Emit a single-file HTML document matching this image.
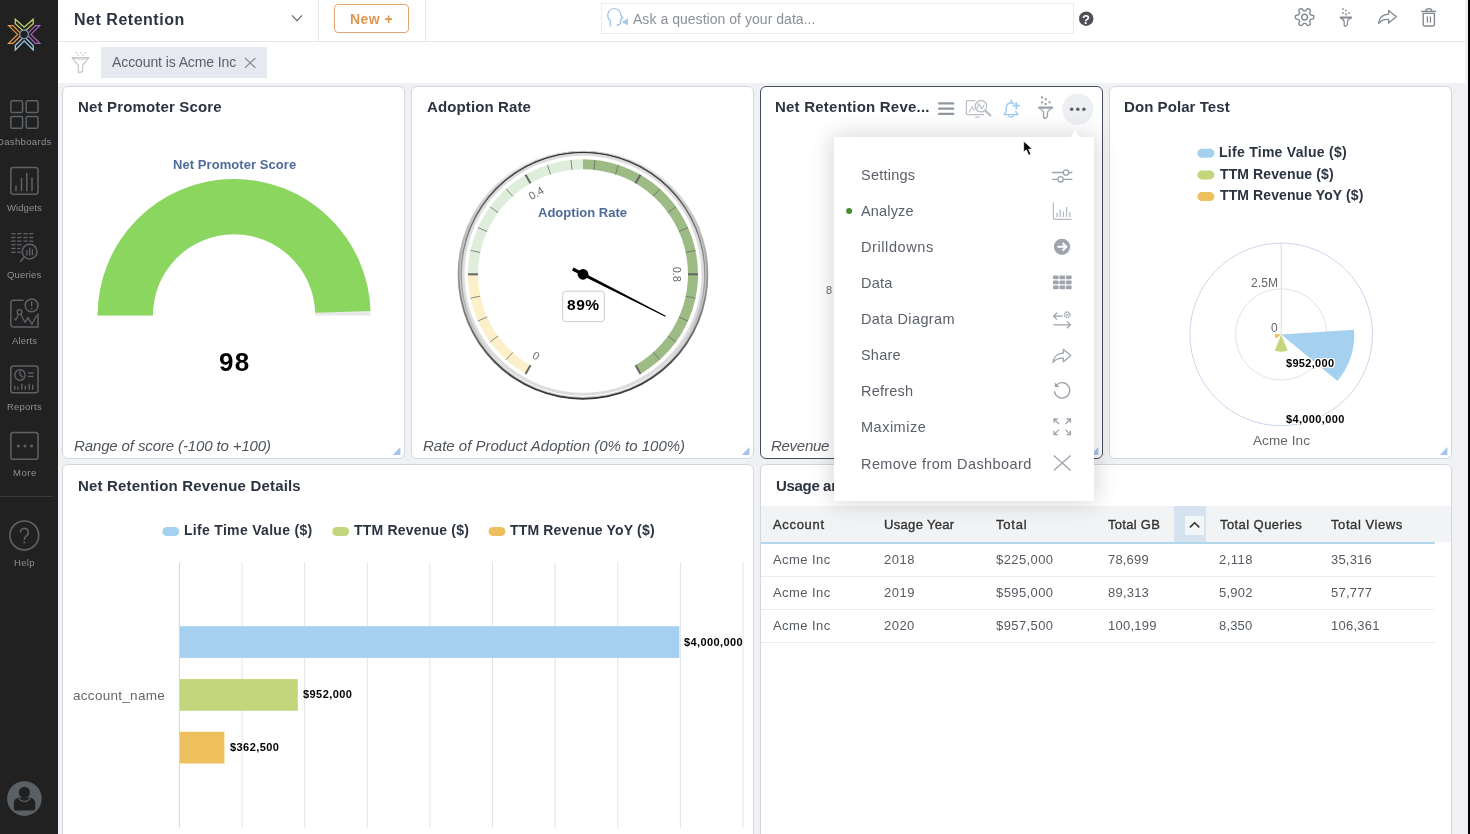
<!DOCTYPE html>
<html><head><meta charset="utf-8"><title>Net Retention</title>
<style>
*{box-sizing:border-box;margin:0;padding:0}
html,body{width:1470px;height:834px;overflow:hidden}
body{font-family:"Liberation Sans",sans-serif;background:#f0f1f4;position:relative;color:#2c3442}
.abs{position:absolute}
.t{position:absolute;white-space:pre;line-height:1;will-change:transform}
svg{position:absolute;left:0;top:0;overflow:visible}
.card{position:absolute;background:#fff;border:1px solid #cfd2d7;border-radius:6px}
</style></head><body>

<!-- TOPBAR -->
<div class="abs" style="left:58px;top:0;width:1412px;height:41px;background:#fff"></div>
<div class="abs" style="left:58px;top:41px;width:1412px;height:1px;background:#e3e6eb"></div>
<div class="abs" style="left:58px;top:42px;width:1412px;height:41px;background:#fff"></div>
<div class="t" style="left:73.94px;top:12.00px;font-size:16px;color:#2c3442;font-weight:700;letter-spacing:0.521px;">Net Retention</div>
<div class="abs" style="left:318px;top:0;width:1px;height:41px;background:#e3e6eb"></div>
<div class="abs" style="left:425px;top:0;width:1px;height:41px;background:#e3e6eb"></div>
<div class="abs" style="left:334px;top:4px;width:75px;height:29px;border:1px solid #e2a571;border-radius:4px"></div>
<div class="t" style="left:350.28px;top:12.00px;font-size:14px;color:#e0974f;font-weight:700;letter-spacing:0.458px;">New +</div>
<div class="abs" style="left:601px;top:3px;width:473px;height:31px;border:1px solid #e7eaee"></div>
<div class="t" style="left:633.37px;top:12.00px;font-size:14px;color:#8b9098;letter-spacing:0.037px;">Ask a question of your data...</div>
<div class="abs" style="left:101px;top:47px;width:166px;height:31px;background:#e7e9f0"></div>
<div class="t" style="left:111.97px;top:55.00px;font-size:14px;color:#5b606a;letter-spacing:-0.098px;">Account is Acme Inc</div>
<svg width="1470" height="834" viewBox="0 0 1470 834" ><polyline points="292,15.4 297,20.8 302,15.4" fill="none" stroke="#6f747d" stroke-width="1.3"/><path d="M245,58L255.4,67.8M255.4,58L245,67.8" stroke="#8b9098" stroke-width="1.2" fill="none"/><path d="M72,57.6H89L82.6,65.4V71.6L78.4,72.6V65.4Z" fill="none" stroke="#c3c6cb" stroke-width="1.2" stroke-linejoin="round"/><path d="M72,57.6Q80.5,61 89,57.6" fill="none" stroke="#c3c6cb" stroke-width="1"/><rect x="75.3" y="52.0" width="1.5" height="1.2" fill="#c3c6cb"/><rect x="79.8" y="52.0" width="1.5" height="1.2" fill="#c3c6cb"/><rect x="84.3" y="52.0" width="1.5" height="1.2" fill="#c3c6cb"/><rect x="77.5" y="54.4" width="1.5" height="1.2" fill="#c3c6cb"/><rect x="82.1" y="54.4" width="1.5" height="1.2" fill="#c3c6cb"/><path d="M610.3,26.6V20.8C607.4,18.6 606.8,14 609,11C611.6,7.6 617,7.8 619.4,10.8C620.6,12.4 620.8,14 620.8,15.2L622.8,17.8L620.8,18.8L621.3,20.4L620,21.4L620.6,22.8C620.8,24 619.8,24.6 618.6,24.6L617.4,24.8V26.2" fill="none" stroke="#9dbfe1" stroke-width="1.2" stroke-linejoin="round"/><path d="M622.4,21.5L628,18.5V25.3L622.4,22.7Z" fill="#a9c9e8"/><circle cx="1086.2" cy="18.7" r="7.2" fill="#4d5156"/><polygon points="1304.60,10.80 1304.87,10.81 1305.15,10.82 1305.42,10.85 1305.73,10.68 1306.14,10.16 1306.61,9.61 1307.12,9.10 1307.67,8.66 1308.12,8.60 1308.49,8.76 1308.85,8.94 1309.20,9.13 1309.54,9.34 1309.88,9.56 1310.20,9.80 1310.37,10.22 1310.27,10.92 1310.08,11.62 1309.84,12.30 1309.59,12.91 1309.60,13.26 1309.76,13.49 1309.91,13.72 1310.06,13.95 1310.19,14.19 1310.31,14.44 1310.42,14.69 1310.72,14.87 1311.38,14.96 1312.09,15.09 1312.79,15.28 1313.45,15.54 1313.72,15.90 1313.76,16.30 1313.79,16.70 1313.80,17.10 1313.79,17.50 1313.76,17.90 1313.72,18.30 1313.45,18.66 1312.79,18.92 1312.09,19.11 1311.38,19.24 1310.72,19.33 1310.42,19.51 1310.31,19.76 1310.19,20.01 1310.06,20.25 1309.91,20.48 1309.76,20.71 1309.60,20.94 1309.59,21.29 1309.84,21.90 1310.08,22.58 1310.27,23.28 1310.37,23.98 1310.20,24.40 1309.88,24.64 1309.54,24.86 1309.20,25.07 1308.85,25.26 1308.49,25.44 1308.12,25.60 1307.67,25.54 1307.12,25.10 1306.61,24.59 1306.14,24.04 1305.73,23.52 1305.42,23.35 1305.15,23.38 1304.87,23.39 1304.60,23.40 1304.33,23.39 1304.05,23.38 1303.78,23.35 1303.47,23.52 1303.06,24.04 1302.59,24.59 1302.08,25.10 1301.53,25.54 1301.08,25.60 1300.71,25.44 1300.35,25.26 1300.00,25.07 1299.66,24.86 1299.32,24.64 1299.00,24.40 1298.83,23.98 1298.93,23.28 1299.12,22.58 1299.36,21.90 1299.61,21.29 1299.60,20.94 1299.44,20.71 1299.29,20.48 1299.14,20.25 1299.01,20.01 1298.89,19.76 1298.78,19.51 1298.48,19.33 1297.82,19.24 1297.11,19.11 1296.41,18.92 1295.75,18.66 1295.48,18.30 1295.44,17.90 1295.41,17.50 1295.40,17.10 1295.41,16.70 1295.44,16.30 1295.48,15.90 1295.75,15.54 1296.41,15.28 1297.11,15.09 1297.82,14.96 1298.48,14.87 1298.78,14.69 1298.89,14.44 1299.01,14.19 1299.14,13.95 1299.29,13.72 1299.44,13.49 1299.60,13.26 1299.61,12.91 1299.36,12.30 1299.12,11.62 1298.93,10.92 1298.83,10.22 1299.00,9.80 1299.32,9.56 1299.66,9.34 1300.00,9.13 1300.35,8.94 1300.71,8.76 1301.08,8.60 1301.53,8.66 1302.08,9.10 1302.59,9.61 1303.06,10.16 1303.47,10.68 1303.78,10.85 1304.05,10.82 1304.33,10.81" fill="none" stroke="#838891" stroke-width="1.4" stroke-linejoin="round"/><circle cx="1304.6" cy="17.1" r="2.9" fill="none" stroke="#838891" stroke-width="1.4"/><rect x="1339.70" y="16.40" width="12.40" height="2.00" rx="0.90" fill="#838891"/><path d="M1340.60,17.90C1343.00,19.00 1344.20,20.00 1344.20,22.00V25.60L1345.40,26.40L1347.40,24.60V22.00C1347.40,20.00 1348.60,19.00 1351.20,17.90" fill="none" stroke="#838891" stroke-width="1.2" stroke-linejoin="round"/><rect x="1342.05" y="8.15" width="1.70" height="1.70" rx="0.3" fill="#838891"/><rect x="1345.15" y="9.65" width="1.70" height="1.70" rx="0.3" fill="#838891"/><rect x="1342.05" y="12.15" width="1.70" height="1.70" rx="0.3" fill="#838891"/><rect x="1348.25" y="12.15" width="1.70" height="1.70" rx="0.3" fill="#838891"/><rect x="1345.15" y="13.55" width="1.70" height="1.70" rx="0.3" fill="#838891"/><path d="M1388.6,10.6L1396.4,16.8L1388.6,23V19.4C1384.4,19 1380.8,20.4 1378.6,23.4C1379,18.2 1382.6,14.6 1388.6,14.2Z" fill="none" stroke="#838891" stroke-width="1.3" stroke-linejoin="round"/><path d="M1423.2,13.4H1434.4V24.4a1.6,1.6 0 0 1 -1.6,1.6H1424.8a1.6,1.6 0 0 1 -1.6,-1.6Z" fill="none" stroke="#838891" stroke-width="1.4"/><line x1="1421.2" y1="11.4" x2="1436.2" y2="11.4" stroke="#838891" stroke-width="1.4"/><path d="M1425.8,11.2a3,2.6 0 0 1 6,0" fill="none" stroke="#838891" stroke-width="1.4"/><line x1="1427.4" y1="16.4" x2="1427.4" y2="22.6" stroke="#838891" stroke-width="1.3"/><line x1="1430.4" y1="16.4" x2="1430.4" y2="22.6" stroke="#838891" stroke-width="1.3"/></svg>
<div class="t" style="left:1082.41px;top:13.00px;font-size:13px;color:#fff;font-weight:700;">?</div>
<!-- CARDS -->
<div class="card" style="left:62px;top:86px;width:343px;height:373px;border-color:#d3d6da"></div>
<div class="card" style="left:411px;top:86px;width:343px;height:373px;border-color:#d3d6da"></div>
<div class="card" style="left:760px;top:86px;width:343px;height:373px;border-color:#454d5c"></div>
<div class="card" style="left:1109px;top:86px;width:343px;height:373px;border-color:#d3d6da"></div>
<div class="card" style="left:62px;top:464px;width:692px;height:380px;border-color:#d3d6da"></div>
<div class="card" style="left:760px;top:464px;width:692px;height:380px;border-color:#d3d6da"></div>
<svg width="1470" height="834" viewBox="0 0 1470 834" ><path d="M400.4,447V455H392.79999999999995Z" fill="#9dbdea" opacity="0.9"/><path d="M749.4,447V455H741.8Z" fill="#9dbdea" opacity="0.9"/><path d="M1098.4,447V455H1090.8000000000002Z" fill="#9dbdea" opacity="0.9"/><path d="M1447.4,447V455H1439.8000000000002Z" fill="#9dbdea" opacity="0.9"/></svg>
<!-- CARD1 NPS -->
<div class="t" style="left:77.81px;top:99.00px;font-size:15px;color:#2c3442;font-weight:700;letter-spacing:0.167px;">Net Promoter Score</div>
<div class="t" style="left:172.54px;top:158.00px;font-size:13px;color:#4f6b9b;font-weight:700;letter-spacing:0.066px;">Net Promoter Score</div>
<svg width="1470" height="834" viewBox="0 0 1470 834" ><path d="M97.60,315.40A136.5,136.5 0 0 1 370.60,315.40L315.30,315.40A81.2,81.2 0 0 0 152.90,315.40Z" fill="#e8e8e8"/><path d="M97.60,315.40A136.5,136.5 0 0 1 370.53,311.11L315.26,312.85A81.2,81.2 0 0 0 152.90,315.40Z" fill="#8ad65f"/></svg>
<div class="t" style="left:218.62px;top:349.00px;font-size:26px;color:#000;font-weight:700;letter-spacing:1.352px;">98</div>
<div class="t" style="left:73.85px;top:438.00px;font-size:15px;color:#4f545d;font-style:italic;letter-spacing:-0.125px;">Range of score (-100 to +100)</div>
<!-- CARD2 Adoption gauge -->
<div class="t" style="left:426.54px;top:99.00px;font-size:15px;color:#2c3442;font-weight:700;letter-spacing:0.116px;">Adoption Rate</div>
<svg width="1470" height="834" viewBox="0 0 1470 834" ><defs><linearGradient id="g1" x1="0" y1="0" x2="0" y2="1"><stop offset="0" stop-color="#fff"/><stop offset="1" stop-color="#333"/></linearGradient><linearGradient id="g2" x1="0" y1="0" x2="0" y2="1"><stop offset="0" stop-color="#333"/><stop offset="1" stop-color="#fff"/></linearGradient></defs><circle cx="583" cy="274.3" r="125.35" fill="url(#g1)"/><circle cx="583" cy="274.3" r="123.05" fill="url(#g2)" stroke="#ccc" stroke-width="1"/><circle cx="583" cy="274.3" r="120.75" fill="#fff" stroke="#ccc" stroke-width="1"/><path d="M582.98,395.05A120.75,120.75 0 1 1 583.02,395.05L583.02,392.75A118.45,118.45 0 1 0 582.98,392.75Z" fill="#ddd"/><path d="M525.50,373.89A115.0,115.0 0 0 1 468.00,274.30L478.00,274.30A105.0,105.0 0 0 0 530.50,365.23Z" fill="#fcf0cb"/><path d="M468.00,274.30A115.0,115.0 0 0 1 583.00,159.30L583.00,169.30A105.0,105.0 0 0 0 478.00,274.30Z" fill="#deeedb"/><path d="M583.00,159.30A115.0,115.0 0 0 1 640.50,373.89L635.50,365.23A105.0,105.0 0 0 0 583.00,169.30Z" fill="#9dbb85"/><line x1="525.50" y1="373.89" x2="530.50" y2="365.23" stroke="#666" stroke-width="2" /><line x1="506.05" y1="359.76" x2="512.74" y2="352.33" stroke="#666" stroke-width="1" stroke-opacity="0.75"/><line x1="489.96" y1="341.90" x2="498.05" y2="336.02" stroke="#666" stroke-width="1" stroke-opacity="0.75"/><line x1="477.94" y1="321.07" x2="487.08" y2="317.01" stroke="#666" stroke-width="1" stroke-opacity="0.75"/><line x1="470.51" y1="298.21" x2="480.29" y2="296.13" stroke="#666" stroke-width="1" stroke-opacity="0.75"/><line x1="468.00" y1="274.30" x2="478.00" y2="274.30" stroke="#666" stroke-width="2" /><line x1="470.51" y1="250.39" x2="480.29" y2="252.47" stroke="#666" stroke-width="1" stroke-opacity="0.75"/><line x1="477.94" y1="227.53" x2="487.08" y2="231.59" stroke="#666" stroke-width="1" stroke-opacity="0.75"/><line x1="489.96" y1="206.70" x2="498.05" y2="212.58" stroke="#666" stroke-width="1" stroke-opacity="0.75"/><line x1="506.05" y1="188.84" x2="512.74" y2="196.27" stroke="#666" stroke-width="1" stroke-opacity="0.75"/><line x1="525.50" y1="174.71" x2="530.50" y2="183.37" stroke="#666" stroke-width="2" /><line x1="547.46" y1="164.93" x2="550.55" y2="174.44" stroke="#666" stroke-width="1" stroke-opacity="0.75"/><line x1="570.98" y1="159.93" x2="572.02" y2="169.88" stroke="#666" stroke-width="1" stroke-opacity="0.75"/><line x1="595.02" y1="159.93" x2="593.98" y2="169.88" stroke="#666" stroke-width="1" stroke-opacity="0.75"/><line x1="618.54" y1="164.93" x2="615.45" y2="174.44" stroke="#666" stroke-width="1" stroke-opacity="0.75"/><line x1="640.50" y1="174.71" x2="635.50" y2="183.37" stroke="#666" stroke-width="2" /><line x1="659.95" y1="188.84" x2="653.26" y2="196.27" stroke="#666" stroke-width="1" stroke-opacity="0.75"/><line x1="676.04" y1="206.70" x2="667.95" y2="212.58" stroke="#666" stroke-width="1" stroke-opacity="0.75"/><line x1="688.06" y1="227.53" x2="678.92" y2="231.59" stroke="#666" stroke-width="1" stroke-opacity="0.75"/><line x1="695.49" y1="250.39" x2="685.71" y2="252.47" stroke="#666" stroke-width="1" stroke-opacity="0.75"/><line x1="698.00" y1="274.30" x2="688.00" y2="274.30" stroke="#666" stroke-width="2" /><line x1="695.49" y1="298.21" x2="685.71" y2="296.13" stroke="#666" stroke-width="1" stroke-opacity="0.75"/><line x1="688.06" y1="321.07" x2="678.92" y2="317.01" stroke="#666" stroke-width="1" stroke-opacity="0.75"/><line x1="676.04" y1="341.90" x2="667.95" y2="336.02" stroke="#666" stroke-width="1" stroke-opacity="0.75"/><line x1="659.95" y1="359.76" x2="653.26" y2="352.33" stroke="#666" stroke-width="1" stroke-opacity="0.75"/><line x1="640.50" y1="373.89" x2="635.50" y2="365.23" stroke="#666" stroke-width="2" /><text x="536.10" y="355.53" transform="rotate(30.0 536.10 355.53)" text-anchor="middle" dy="4" font-size="11" fill="#666" font-family="Liberation Sans, sans-serif">0</text><text x="536.10" y="193.07" transform="rotate(-30.0 536.10 193.07)" text-anchor="middle" dy="4" font-size="11" fill="#666" font-family="Liberation Sans, sans-serif">0.4</text><text x="676.80" y="274.30" transform="rotate(90.0 676.80 274.30)" text-anchor="middle" dy="4" font-size="11" fill="#666" font-family="Liberation Sans, sans-serif">0.8</text><g transform="translate(583 274.3) rotate(27.00)"><path d="M-11.50,-1.7L92.58,-0.55L92.58,0.55L-11.50,1.7Z" fill="#000"/></g><circle cx="583" cy="274.3" r="5.4" fill="#000"/><rect x="562.7" y="291.2" width="41.6" height="30.4" rx="3" fill="#fff" stroke="#ccc" stroke-width="1"/></svg>
<div class="t" style="left:538.39px;top:206.00px;font-size:13px;color:#4f6b9b;font-weight:700;letter-spacing:0.020px;">Adoption Rate</div>
<div class="t" style="left:566.82px;top:297.00px;font-size:15.5px;color:#000;font-weight:700;letter-spacing:0.534px;">89%</div>
<div class="t" style="left:422.85px;top:438.00px;font-size:15px;color:#4f545d;font-style:italic;">Rate of Product Adoption (0% to 100%)</div>
<!-- CARD3 -->
<div class="t" style="left:775.11px;top:99.00px;font-size:15px;color:#2c3442;font-weight:700;letter-spacing:0.225px;">Net Retention Reve...</div>
<div class="t" style="left:771.15px;top:438.00px;font-size:15px;color:#4f545d;font-style:italic;letter-spacing:-0.276px;">Revenue</div>
<div class="t" style="left:825.73px;top:285.00px;font-size:11px;color:#666;">8</div>
<svg width="1470" height="834" viewBox="0 0 1470 834" ><rect x="938.2" y="102.30000000000001" width="16" height="2.2" rx="0.6" fill="#8f97a3"/><rect x="938.2" y="107.5" width="16" height="2.2" rx="0.6" fill="#8f97a3"/><rect x="938.2" y="112.80000000000001" width="16" height="2.2" rx="0.6" fill="#8f97a3"/><path d="M975.4,100.6H967.4a1,1 0 0 0 -1,1V113.6a1,1 0 0 0 1,1H984" fill="none" stroke="#bbbfc6" stroke-width="1.3"/><line x1="975.2" y1="117.2" x2="979.4" y2="117.2" stroke="#bbbfc6" stroke-width="1.2"/><polyline points="969.2,112.4 972.2,106.8 974.4,110.6" fill="none" stroke="#bbbfc6" stroke-width="1.1"/><circle cx="980.9" cy="106.2" r="5.7" fill="#fff" stroke="#bbbfc6" stroke-width="1.3"/><polyline points="976.6,109.4 979,103.8 981.8,108.6 984.2,104.8" fill="none" stroke="#bbbfc6" stroke-width="1.2"/><line x1="985.2" y1="110.6" x2="990.4" y2="115.4" stroke="#bbbfc6" stroke-width="2.2" stroke-linecap="round"/><path d="M1013.9,103.6C1013.2,103 1012.4,102.7 1011.2,102.7C1008.4,102.8 1006.5,104.6 1006.3,107.6C1006.2,110 1006.4,112.8 1004.2,114.6H1018.1C1016.8,113.7 1016.1,112.8 1015.8,111.4" fill="none" stroke="#9bcbf0" stroke-width="1.4" stroke-linejoin="round" stroke-linecap="round"/><line x1="1011.3" y1="100.2" x2="1011.3" y2="102.6" stroke="#9bcbf0" stroke-width="1.6" stroke-linecap="round"/><path d="M1008.3,115.2a3,3 0 0 0 5.6,0" fill="none" stroke="#9bcbf0" stroke-width="1.4"/><path d="M1016.3,102.8V108.6M1013.4,105.7H1019.2" stroke="#9bcbf0" stroke-width="1.7" fill="none" stroke-linecap="round"/><rect x="1038.09" y="106.40" width="15.13" height="2.44" rx="1.10" fill="#9aa0a9"/><path d="M1039.18,108.23C1042.11,109.57 1043.58,110.79 1043.58,113.23V117.62L1045.04,118.60L1047.48,116.40V113.23C1047.48,110.79 1048.94,109.57 1052.12,108.23" fill="none" stroke="#9aa0a9" stroke-width="1.3" stroke-linejoin="round"/><rect x="1040.95" y="96.33" width="2.07" height="2.07" rx="0.3" fill="#9aa0a9"/><rect x="1044.74" y="98.16" width="2.07" height="2.07" rx="0.3" fill="#9aa0a9"/><rect x="1040.95" y="101.22" width="2.07" height="2.07" rx="0.3" fill="#9aa0a9"/><rect x="1048.52" y="101.22" width="2.07" height="2.07" rx="0.3" fill="#9aa0a9"/><rect x="1044.74" y="102.92" width="2.07" height="2.07" rx="0.3" fill="#9aa0a9"/><circle cx="1077.8" cy="109.1" r="15.6" fill="#edeff2"/><circle cx="1071.7" cy="109.2" r="1.75" fill="#5b6068"/><circle cx="1077.8" cy="109.2" r="1.75" fill="#5b6068"/><circle cx="1083.9" cy="109.2" r="1.75" fill="#5b6068"/></svg>
<!-- CARD4 polar -->
<div class="t" style="left:1124.01px;top:99.00px;font-size:15px;color:#2c3442;font-weight:700;letter-spacing:0.072px;">Don Polar Test</div>
<div class="t" style="left:1219.48px;top:145.00px;font-size:14px;color:#2c3442;font-weight:700;letter-spacing:0.275px;">Life Time Value ($)</div>
<div class="t" style="left:1220.25px;top:167.00px;font-size:14px;color:#2c3442;font-weight:700;letter-spacing:0.109px;">TTM Revenue ($)</div>
<div class="t" style="left:1220.25px;top:188.00px;font-size:14px;color:#2c3442;font-weight:700;letter-spacing:0.098px;">TTM Revenue YoY ($)</div>
<svg width="1470" height="834" viewBox="0 0 1470 834" ><rect x="1197.4" y="148.8" width="17" height="9" rx="4.5" fill="#a6d0ef"/><rect x="1197.4" y="170.4" width="17" height="9" rx="4.5" fill="#c4d67b"/><rect x="1197.4" y="192.1" width="17" height="9" rx="4.5" fill="#edc05d"/><line x1="1281.2" y1="334.4" x2="1281.2" y2="243.09999999999997" stroke="#dcdcdc" stroke-width="1"/><circle cx="1281.2" cy="334.4" r="45.65" fill="none" stroke="#e2e2e2" stroke-width="1"/><circle cx="1281.2" cy="334.4" r="91.3" fill="none" stroke="#ccd6eb" stroke-width="1"/><path d="M1281.2,334.4L1354.10,329.81A73.04,73.04 0 0 1 1337.48,380.96Z" fill="#a6d0ef"/><path d="M1281.2,334.4L1287.60,350.56A17.38352,17.38352 0 0 1 1274.80,350.56Z" fill="#c4d67b"/><path d="M1281.2,334.4L1276.10,338.62A6.61925,6.61925 0 0 1 1274.59,333.98Z" fill="#edc05d"/></svg>
<div class="t" style="left:1251.00px;top:277.00px;font-size:12px;color:#666;letter-spacing:0.103px;">2.5M</div>
<div class="t" style="left:1270.93px;top:322.00px;font-size:12px;color:#666;">0</div>
<div class="t" style="left:1285.86px;top:358.00px;font-size:11px;color:#000;font-weight:700;letter-spacing:0.315px;text-shadow:-1px -1px 0 #fff,1px -1px 0 #fff,-1px 1px 0 #fff,1px 1px 0 #fff,0 1px 0 #fff,0 -1px 0 #fff,1px 0 0 #fff,-1px 0 0 #fff;">$952,000</div>
<div class="t" style="left:1285.86px;top:414.00px;font-size:11px;color:#000;font-weight:700;letter-spacing:0.359px;text-shadow:-1px -1px 0 #fff,1px -1px 0 #fff,-1px 1px 0 #fff,1px 1px 0 #fff,0 1px 0 #fff,0 -1px 0 #fff,1px 0 0 #fff,-1px 0 0 #fff;">$4,000,000</div>
<div class="t" style="left:1252.57px;top:434.00px;font-size:13.5px;color:#666;letter-spacing:0.101px;">Acme Inc</div>
<!-- CARD5 bars -->
<div class="t" style="left:78.11px;top:478.00px;font-size:15px;color:#2c3442;font-weight:700;letter-spacing:0.184px;">Net Retention Revenue Details</div>
<div class="t" style="left:183.98px;top:523.00px;font-size:14px;color:#2c3442;font-weight:700;letter-spacing:0.308px;">Life Time Value ($)</div>
<div class="t" style="left:354.45px;top:523.00px;font-size:14px;color:#2c3442;font-weight:700;letter-spacing:0.202px;">TTM Revenue ($)</div>
<div class="t" style="left:510.45px;top:523.00px;font-size:14px;color:#2c3442;font-weight:700;letter-spacing:0.164px;">TTM Revenue YoY ($)</div>
<svg width="1470" height="834" viewBox="0 0 1470 834" ><rect x="162.4" y="527" width="16.8" height="9" rx="4.5" fill="#a6d0ef"/><rect x="332.3" y="527" width="16.8" height="9" rx="4.5" fill="#c4d67b"/><rect x="488.6" y="527" width="16.8" height="9" rx="4.5" fill="#edc05d"/><rect x="241.52" y="562.5" width="1" height="265" fill="#e0e2e8"/><rect x="304.14" y="562.5" width="1" height="265" fill="#e0e2e8"/><rect x="366.76" y="562.5" width="1" height="265" fill="#e0e2e8"/><rect x="429.38" y="562.5" width="1" height="265" fill="#e0e2e8"/><rect x="492.00" y="562.5" width="1" height="265" fill="#e0e2e8"/><rect x="554.62" y="562.5" width="1" height="265" fill="#e0e2e8"/><rect x="617.24" y="562.5" width="1" height="265" fill="#e0e2e8"/><rect x="679.86" y="562.5" width="1" height="265" fill="#e0e2e8"/><rect x="742.48" y="562.5" width="1" height="265" fill="#e0e2e8"/><rect x="178.9" y="562.5" width="1" height="265" fill="#ccd6eb"/><rect x="179.9" y="626.2" width="499.40" height="31.7" fill="#a6d0ef"/><rect x="179.9" y="679.1" width="117.90" height="31.7" fill="#c4d67b"/><rect x="179.9" y="731.8" width="44.50" height="31.7" fill="#edc05d"/></svg>
<div class="t" style="left:684.26px;top:637.00px;font-size:11px;color:#000;font-weight:700;letter-spacing:0.403px;">$4,000,000</div>
<div class="t" style="left:302.86px;top:689.00px;font-size:11px;color:#000;font-weight:700;letter-spacing:0.443px;">$952,000</div>
<div class="t" style="left:229.66px;top:742.00px;font-size:11px;color:#000;font-weight:700;letter-spacing:0.429px;">$362,500</div>
<div class="t" style="left:72.53px;top:689.00px;font-size:13.5px;color:#666;letter-spacing:0.291px;">account_name</div>
<!-- CARD6 table -->
<div class="t" style="left:775.70px;top:478.00px;font-size:15px;color:#2c3442;font-weight:700;letter-spacing:-0.326px;">Usage</div>
<div class="t" style="left:823.27px;top:478.00px;font-size:15px;color:#2c3442;font-weight:700;">and Billing</div>
<div class="abs" style="left:761px;top:506px;width:690px;height:36px;background:#f1f3f5"></div>
<div class="abs" style="left:1174px;top:506px;width:32px;height:36px;background:#d5e2f0"></div>
<div class="abs" style="left:1184.5px;top:515.5px;width:19.5px;height:19px;background:#f3f5f7"></div>
<div class="abs" style="left:761px;top:542px;width:674px;height:2px;background:#b3d8ee"></div>
<div class="abs" style="left:761px;top:576px;width:674px;height:1px;background:#ececec"></div>
<div class="abs" style="left:761px;top:609px;width:674px;height:1px;background:#ececec"></div>
<div class="abs" style="left:761px;top:642px;width:674px;height:1px;background:#ececec"></div>
<div class="t" style="left:773.17px;top:518.00px;font-size:13px;color:#333;letter-spacing:0.675px;-webkit-text-stroke:0.35px #333;">Account</div>
<div class="t" style="left:883.90px;top:518.00px;font-size:13px;color:#333;letter-spacing:0.321px;-webkit-text-stroke:0.35px #333;">Usage Year</div>
<div class="t" style="left:996.31px;top:518.00px;font-size:13px;color:#333;letter-spacing:0.772px;-webkit-text-stroke:0.35px #333;">Total</div>
<div class="t" style="left:1108.01px;top:518.00px;font-size:13px;color:#333;letter-spacing:0.287px;-webkit-text-stroke:0.35px #333;">Total GB</div>
<div class="t" style="left:1219.51px;top:518.00px;font-size:13px;color:#333;letter-spacing:0.422px;-webkit-text-stroke:0.35px #333;">Total Queries</div>
<div class="t" style="left:1331.01px;top:518.00px;font-size:13px;color:#333;letter-spacing:0.583px;-webkit-text-stroke:0.35px #333;">Total Views</div>
<div class="t" style="left:773.17px;top:553.00px;font-size:13px;color:#555a62;letter-spacing:0.440px;">Acme Inc</div>
<div class="t" style="left:884.25px;top:553.00px;font-size:13px;color:#555a62;letter-spacing:0.499px;">2018</div>
<div class="t" style="left:996.47px;top:553.00px;font-size:13px;color:#555a62;letter-spacing:0.400px;">$225,000</div>
<div class="t" style="left:1107.94px;top:553.00px;font-size:13px;color:#555a62;letter-spacing:0.184px;">78,699</div>
<div class="t" style="left:1219.15px;top:553.00px;font-size:13px;color:#555a62;letter-spacing:0.461px;">2,118</div>
<div class="t" style="left:1330.81px;top:553.00px;font-size:13px;color:#555a62;letter-spacing:0.200px;">35,316</div>
<div class="t" style="left:773.17px;top:586.00px;font-size:13px;color:#555a62;letter-spacing:0.440px;">Acme Inc</div>
<div class="t" style="left:884.25px;top:586.00px;font-size:13px;color:#555a62;letter-spacing:0.516px;">2019</div>
<div class="t" style="left:996.47px;top:586.00px;font-size:13px;color:#555a62;letter-spacing:0.400px;">$595,000</div>
<div class="t" style="left:1107.74px;top:586.00px;font-size:13px;color:#555a62;letter-spacing:0.213px;">89,313</div>
<div class="t" style="left:1219.28px;top:586.00px;font-size:13px;color:#555a62;letter-spacing:0.211px;">5,902</div>
<div class="t" style="left:1330.78px;top:586.00px;font-size:13px;color:#555a62;letter-spacing:0.223px;">57,777</div>
<div class="t" style="left:773.17px;top:619.00px;font-size:13px;color:#555a62;letter-spacing:0.440px;">Acme Inc</div>
<div class="t" style="left:884.25px;top:619.00px;font-size:13px;color:#555a62;letter-spacing:0.477px;">2020</div>
<div class="t" style="left:996.47px;top:619.00px;font-size:13px;color:#555a62;letter-spacing:0.400px;">$957,500</div>
<div class="t" style="left:1107.61px;top:619.00px;font-size:13px;color:#555a62;letter-spacing:0.251px;">100,199</div>
<div class="t" style="left:1219.24px;top:619.00px;font-size:13px;color:#555a62;letter-spacing:0.182px;">8,350</div>
<div class="t" style="left:1330.61px;top:619.00px;font-size:13px;color:#555a62;letter-spacing:0.253px;">106,361</div>
<svg width="1470" height="834" viewBox="0 0 1470 834" ><polyline points="1189.9,527.4 1194.6,522.8 1199.3,527.4" fill="none" stroke="#333" stroke-width="1.6"/></svg>
<!-- MENU -->
<div class="abs" style="left:834px;top:137px;width:260px;height:364px;background:#fff;border-radius:2px;box-shadow:0 0 22px 3px rgba(0,0,0,.15)"></div>
<div class="t" style="left:860.95px;top:168.00px;font-size:14.5px;color:#5a5f69;letter-spacing:0.227px;">Settings</div>
<div class="t" style="left:860.77px;top:204.00px;font-size:14.5px;color:#5a5f69;letter-spacing:0.165px;">Analyze</div>
<div class="t" style="left:861.11px;top:240.00px;font-size:14.5px;color:#5a5f69;letter-spacing:0.593px;">Drilldowns</div>
<div class="t" style="left:861.11px;top:276.00px;font-size:14.5px;color:#5a5f69;letter-spacing:0.217px;">Data</div>
<div class="t" style="left:861.11px;top:312.00px;font-size:14.5px;color:#5a5f69;letter-spacing:0.371px;">Data Diagram</div>
<div class="t" style="left:860.95px;top:348.00px;font-size:14.5px;color:#5a5f69;letter-spacing:0.201px;">Share</div>
<div class="t" style="left:861.11px;top:384.00px;font-size:14.5px;color:#5a5f69;letter-spacing:0.225px;">Refresh</div>
<div class="t" style="left:861.11px;top:420.00px;font-size:14.5px;color:#5a5f69;letter-spacing:0.499px;">Maximize</div>
<div class="t" style="left:861.11px;top:457.00px;font-size:14.5px;color:#5a5f69;letter-spacing:0.417px;">Remove from Dashboard</div>
<svg width="1470" height="834" viewBox="0 0 1470 834" ><path d="M1070.4,137.5L1075.1,130L1079.8,137.5Z" fill="#fff"/><circle cx="849.1" cy="211.1" r="3" fill="#4b8a2c"/><path d="M1052,172.5H1063.2M1068.8,172.5H1072.4M1052,179.3H1057.8M1063.4,179.3H1072.4" stroke="#9fa4ac" stroke-width="1.3" fill="none"/><circle cx="1066" cy="172.5" r="2.7" fill="none" stroke="#9fa4ac" stroke-width="1.3"/><circle cx="1060.6" cy="179.3" r="2.7" fill="none" stroke="#9fa4ac" stroke-width="1.3"/><path d="M1053.4,202.2V217.4a2,2 0 0 0 2,2H1071.6" fill="none" stroke="#b6bbc3" stroke-width="1.2"/><line x1="1057" y1="213" x2="1057" y2="217" stroke="#b6bbc3" stroke-width="1.3"/><line x1="1060.2" y1="209.4" x2="1060.2" y2="217" stroke="#b6bbc3" stroke-width="1.3"/><line x1="1063.4" y1="211.4" x2="1063.4" y2="217" stroke="#b6bbc3" stroke-width="1.3"/><line x1="1066.6" y1="207.2" x2="1066.6" y2="217" stroke="#b6bbc3" stroke-width="1.3"/><line x1="1069.8" y1="212" x2="1069.8" y2="217" stroke="#b6bbc3" stroke-width="1.3"/><circle cx="1062" cy="246.8" r="8.1" fill="#9fa4ac"/><path d="M1057.4,246.8H1066M1062.6,243L1066.4,246.8L1062.6,250.6" fill="none" stroke="#fff" stroke-width="2"/><rect x="1053.0" y="275.4" width="5.6" height="3.8" rx="0.8" fill="#9fa4ac"/><rect x="1059.5" y="275.4" width="5.6" height="3.8" rx="0.8" fill="#9fa4ac"/><rect x="1066.0" y="275.4" width="5.6" height="3.8" rx="0.8" fill="#9fa4ac"/><rect x="1053.0" y="280.4" width="5.6" height="3.8" rx="0.8" fill="#9fa4ac"/><rect x="1059.5" y="280.4" width="5.6" height="3.8" rx="0.8" fill="#9fa4ac"/><rect x="1066.0" y="280.4" width="5.6" height="3.8" rx="0.8" fill="#9fa4ac"/><rect x="1053.0" y="285.4" width="5.6" height="3.8" rx="0.8" fill="#9fa4ac"/><rect x="1059.5" y="285.4" width="5.6" height="3.8" rx="0.8" fill="#9fa4ac"/><rect x="1066.0" y="285.4" width="5.6" height="3.8" rx="0.8" fill="#9fa4ac"/><path d="M1062.6,316.2H1053.6M1057,312.8L1053.6,316.2L1057,319.6" fill="none" stroke="#9fa4ac" stroke-width="1.3"/><path d="M1053.4,324.8H1070.4M1067,321.4L1070.4,324.8L1067,328.2" fill="none" stroke="#9fa4ac" stroke-width="1.3"/><circle cx="1067.2" cy="314.8" r="2.8" fill="none" stroke="#9fa4ac" stroke-width="1.5" stroke-dasharray="1.4 0.8"/><circle cx="1067.2" cy="314.8" r="1" fill="none" stroke="#9fa4ac" stroke-width="0.8"/><path d="M1063.4,349.4L1070.8,355.6L1063.4,361.8V358.2C1059,357.8 1055.4,359.4 1053,362.4C1053.4,357.2 1057.2,353.4 1063.4,353Z" fill="none" stroke="#9fa4ac" stroke-width="1.3" stroke-linejoin="round"/><path d="M1056.3,385.3A7.7,7.7 0 1 1 1054.4,391.1" fill="none" stroke="#9fa4ac" stroke-width="1.3"/><path d="M1054.8,382.4V386.9H1059.4Z" fill="#9fa4ac"/><path d="M1054,419L1059,424M1054,422.8V419H1057.8M1070.4,419L1065.4,424M1066.6,419H1070.4V422.8M1054,434.6L1059,429.6M1054,430.8V434.6H1057.8M1070.4,434.6L1065.4,429.6M1070.4,430.8V434.6H1066.6" fill="none" stroke="#9fa4ac" stroke-width="1.3"/><path d="M1053.8,455.4L1070.6,470.6M1070.6,455.4L1053.8,470.6" fill="none" stroke="#9fa4ac" stroke-width="1.3"/><path d="M1023.7,141.2V152L1026.3,149.8L1028.7,155.2L1030.9,154.2L1028.6,149.1H1032.3Z" fill="#000" stroke="#f4f4f4" stroke-width="0.8" stroke-linejoin="round"/></svg>
<!-- SIDEBAR -->
<div class="abs" style="left:0;top:0;width:58px;height:834px;background:#212121;overflow:hidden">
<svg width="58" height="834" viewBox="0 0 58 834" ><polygon points="15.3,19.2 24.2,27.2 33.2,19.2 33.2,23.6 24.2,31.6 15.3,23.6" fill="none" stroke="#c3d96b" stroke-width="1.25" stroke-linejoin="miter"/><polygon points="15.3,50 24.2,40.9 33.2,50 33.2,45.6 24.2,36.6 15.3,45.6" fill="none" stroke="#9fcdea" stroke-width="1.25" stroke-linejoin="miter"/><polygon points="8.6,25.6 17.6,34.4 8.6,43.4 13,43.4 21.6,34.4 13,25.6" fill="none" stroke="#e89d45" stroke-width="1.25" stroke-linejoin="miter"/><polygon points="39.8,25.6 30.9,34.4 39.8,43.4 35.4,43.4 26.8,34.4 35.4,25.6" fill="none" stroke="#a462b8" stroke-width="1.25" stroke-linejoin="miter"/><circle cx="24.1" cy="34.3" r="4.3" fill="#212121" stroke="#7f93a8" stroke-width="1.3"/><rect x="10.8" y="100.8" width="11.8" height="11.8" rx="1.6" fill="none" stroke="#5d6267" stroke-width="1.5"/><rect x="26.2" y="100.8" width="11.8" height="11.8" rx="1.6" fill="none" stroke="#5d6267" stroke-width="1.5"/><rect x="10.8" y="116.5" width="11.8" height="11.8" rx="1.6" fill="none" stroke="#5d6267" stroke-width="1.5"/><rect x="26.2" y="116.5" width="11.8" height="11.8" rx="1.6" fill="none" stroke="#5d6267" stroke-width="1.5"/><rect x="10.8" y="167.4" width="27.2" height="26.8" rx="2.6" fill="none" stroke="#5d6267" stroke-width="1.5"/><line x1="16" y1="185.4" x2="16" y2="191.2" stroke="#5d6267" stroke-width="1.5"/><line x1="21.5" y1="178" x2="21.5" y2="191.2" stroke="#5d6267" stroke-width="1.5"/><line x1="26.8" y1="172.8" x2="26.8" y2="191.2" stroke="#5d6267" stroke-width="1.5"/><line x1="32" y1="177.4" x2="32" y2="191.2" stroke="#5d6267" stroke-width="1.5"/><line x1="11.2" y1="233.7" x2="15.6" y2="233.7" stroke="#5d6267" stroke-width="1.3"/><line x1="17.1" y1="233.7" x2="21.5" y2="233.7" stroke="#5d6267" stroke-width="1.3"/><line x1="23.4" y1="233.7" x2="27.7" y2="233.7" stroke="#5d6267" stroke-width="1.3"/><line x1="29.2" y1="233.7" x2="33.2" y2="233.7" stroke="#5d6267" stroke-width="1.3"/><line x1="11.2" y1="237.5" x2="15.6" y2="237.5" stroke="#5d6267" stroke-width="1.3"/><line x1="17.1" y1="237.5" x2="21.5" y2="237.5" stroke="#5d6267" stroke-width="1.3"/><line x1="23.4" y1="237.5" x2="27.7" y2="237.5" stroke="#5d6267" stroke-width="1.3"/><line x1="29.2" y1="237.5" x2="33.2" y2="237.5" stroke="#5d6267" stroke-width="1.3"/><line x1="11.2" y1="241.1" x2="15.6" y2="241.1" stroke="#5d6267" stroke-width="1.3"/><line x1="17.1" y1="241.1" x2="21.5" y2="241.1" stroke="#5d6267" stroke-width="1.3"/><line x1="23.4" y1="241.1" x2="27.7" y2="241.1" stroke="#5d6267" stroke-width="1.3"/><line x1="29.2" y1="241.1" x2="33.2" y2="241.1" stroke="#5d6267" stroke-width="1.3"/><line x1="11.2" y1="244.7" x2="15.6" y2="244.7" stroke="#5d6267" stroke-width="1.3"/><line x1="17.1" y1="244.7" x2="21.5" y2="244.7" stroke="#5d6267" stroke-width="1.3"/><line x1="11.2" y1="248.5" x2="15.6" y2="248.5" stroke="#5d6267" stroke-width="1.3"/><line x1="17.1" y1="248.5" x2="20.6" y2="248.5" stroke="#5d6267" stroke-width="1.3"/><line x1="11.2" y1="252.3" x2="15.6" y2="252.3" stroke="#5d6267" stroke-width="1.3"/><line x1="17.1" y1="252.3" x2="20.6" y2="252.3" stroke="#5d6267" stroke-width="1.3"/><circle cx="29.6" cy="251.6" r="7.4" fill="#212121" stroke="#5d6267" stroke-width="1.5"/><line x1="24.2" y1="257" x2="20.6" y2="261.2" stroke="#5d6267" stroke-width="1.6" stroke-linecap="round"/><line x1="26.9" y1="250" x2="26.9" y2="255.4" stroke="#5d6267" stroke-width="1.3"/><line x1="29.7" y1="247.6" x2="29.7" y2="255.4" stroke="#5d6267" stroke-width="1.3"/><line x1="32.4" y1="249.2" x2="32.4" y2="255.4" stroke="#5d6267" stroke-width="1.3"/><path d="M23.6,300.2H13.4a2.6,2.6 0 0 0 -2.6,2.6V324.4a2.6,2.6 0 0 0 2.6,2.6H38V313.4" fill="none" stroke="#5d6267" stroke-width="1.5"/><circle cx="31.6" cy="305.4" r="6.4" fill="none" stroke="#5d6267" stroke-width="1.5"/><line x1="31.6" y1="301.4" x2="31.6" y2="306.4" stroke="#5d6267" stroke-width="1.5"/><circle cx="31.6" cy="308.8" r="0.9" fill="#5d6267"/><circle cx="19.5" cy="312" r="2.4" fill="none" stroke="#5d6267" stroke-width="1.3"/><polyline points="14.2,318.4 15.8,320 18.6,314.4" fill="none" stroke="#5d6267" stroke-width="1.3"/><polyline points="20.8,314.2 25,322.2 28,317.8 32,324.2 36.6,315.4" fill="none" stroke="#5d6267" stroke-width="1.3"/><rect x="10.8" y="366" width="27.2" height="26.8" rx="2.6" fill="none" stroke="#5d6267" stroke-width="1.5"/><circle cx="20" cy="375" r="5.2" fill="none" stroke="#5d6267" stroke-width="1.4"/><polyline points="20,371 20,375 23.2,377.2" fill="none" stroke="#5d6267" stroke-width="1.3"/><line x1="28" y1="373" x2="33.6" y2="373" stroke="#5d6267" stroke-width="1.4"/><line x1="28" y1="376.4" x2="33.6" y2="376.4" stroke="#5d6267" stroke-width="1.4"/><line x1="14.8" y1="385.8" x2="14.8" y2="389.8" stroke="#5d6267" stroke-width="1.4"/><line x1="17.9" y1="386.8" x2="17.9" y2="389.8" stroke="#5d6267" stroke-width="1.4"/><line x1="21.8" y1="383.8" x2="21.8" y2="389.8" stroke="#5d6267" stroke-width="1.4"/><line x1="25.3" y1="385.8" x2="25.3" y2="389.8" stroke="#5d6267" stroke-width="1.4"/><line x1="29.2" y1="383.8" x2="29.2" y2="389.8" stroke="#5d6267" stroke-width="1.4"/><line x1="32.7" y1="384.8" x2="32.7" y2="389.8" stroke="#5d6267" stroke-width="1.4"/><rect x="10.8" y="432.5" width="27.2" height="26.8" rx="2.6" fill="none" stroke="#5d6267" stroke-width="1.5"/><circle cx="18.4" cy="445.9" r="1.5" fill="#5d6267"/><circle cx="24.9" cy="445.9" r="1.5" fill="#5d6267"/><circle cx="31.6" cy="445.9" r="1.5" fill="#5d6267"/><rect x="0" y="496" width="53" height="1" fill="#383838"/><circle cx="24.3" cy="535.4" r="14.4" fill="none" stroke="#5d6267" stroke-width="1.7"/><path d="M20.4,532.4a4,4 0 1 1 6.2,3.3c-1.6,1.1 -2.3,1.9 -2.3,4" fill="none" stroke="#5d6267" stroke-width="1.6"/><circle cx="24.3" cy="542.6" r="1" fill="#5d6267"/><circle cx="24.4" cy="798.6" r="17.3" fill="#5b6065"/><circle cx="24.4" cy="792.4" r="5.6" fill="#212121"/><path d="M13.8,810.6V803a5.4,5.4 0 0 1 5.4,-5.4H29.8a5.4,5.4 0 0 1 5.4,5.4V808.6a2,2 0 0 1 -2,2H15.8a2,2 0 0 1 -2,-2Z" fill="#212121"/><path d="M18.4,797.7a6.8,6.8 0 0 0 12,0" fill="none" stroke="#5b6065" stroke-width="1.2"/></svg>
<div class="t" style="left:-2.98px;top:137.00px;font-size:9.5px;color:#8e9196;letter-spacing:0.344px;">Dashboards</div>
<div class="t" style="left:6.96px;top:203.00px;font-size:9.5px;color:#8e9196;letter-spacing:0.061px;">Widgets</div>
<div class="t" style="left:7.35px;top:270.00px;font-size:9.5px;color:#8e9196;letter-spacing:0.172px;">Queries</div>
<div class="t" style="left:11.98px;top:336.00px;font-size:9.5px;color:#8e9196;letter-spacing:0.136px;">Alerts</div>
<div class="t" style="left:7.02px;top:402.00px;font-size:9.5px;color:#8e9196;letter-spacing:0.227px;">Reports</div>
<div class="t" style="left:12.52px;top:468.00px;font-size:9.5px;color:#8e9196;letter-spacing:0.585px;">More</div>
<div class="t" style="left:13.82px;top:558.00px;font-size:9.5px;color:#8e9196;letter-spacing:0.309px;">Help</div>
</div>
<div class="abs" style="left:1465px;top:0;width:3px;height:834px;background:#eff0f2"></div>
<div class="abs" style="left:1468px;top:0;width:2px;height:834px;background:#000"></div>
</body></html>
